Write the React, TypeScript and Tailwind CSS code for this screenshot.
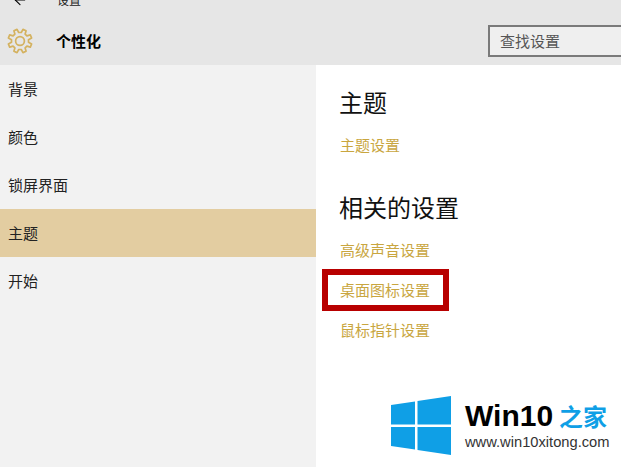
import { ArrowLeft } from 'lucide-react';

const FONT = 'font-["Noto_Sans_CJK_SC","Liberation_Sans",sans-serif]';

const navItems = ['背景', '颜色', '锁屏界面', '主题', '开始'];
const relatedLinks = ['高级声音设置', '桌面图标设置', '鼠标指针设置'];

// outline of an 8 tooth gear, centre 13,13
function gearPath() {
  const points: string[] = [];
  for (let i = 0; i < 8; i++) {
    const a = (i * Math.PI) / 4 + Math.PI / 8;
    const step = Math.PI / 8;
    const corners: [number, number][] = [
      [8.6, a - step * 0.62],
      [12, a - step * 0.36],
      [12, a + step * 0.36],
      [8.6, a + step * 0.62],
    ];
    corners.forEach(([r, t]) => {
      points.push(`${(13 + r * Math.cos(t)).toFixed(2)},${(13 + r * Math.sin(t)).toFixed(2)}`);
    });
  }
  return `M${points.join('L')}Z`;
}

function GearIcon() {
  return (
    <svg width="26" height="26" viewBox="0 0 26 26" fill="none" stroke="#d4b260" strokeWidth="1.7" strokeLinejoin="round" className="ml-[7px] shrink-0">
      <path d={gearPath()} />
      <circle cx="13" cy="13" r="4.4" />
    </svg>
  );
}

function WinLogo() {
  return (
    <svg width="60" height="60" viewBox="0 0 60 60" className="block shrink-0">
      <polygon points="0,9 24,5.5 24,28.5 0,28.5" fill="#0f9fe6" />
      <polygon points="26.5,5 60,0 60,28.5 26.5,28.5" fill="#0f9fe6" />
      <polygon points="0,31 24,31 24,53.5 0,50" fill="#0f9fe6" />
      <polygon points="26.5,31 60,31 60,59 26.5,54" fill="#0f9fe6" />
    </svg>
  );
}

export default function App() {
  return (
    <div className={`relative w-[621px] h-[467px] overflow-hidden bg-white ${FONT}`}>
      <header className="relative h-[65px] overflow-hidden bg-[#e6e6e6]">
        <div className="flex items-center h-[16px] mt-[-8px]">
          <ArrowLeft className="ml-[12px] shrink-0 text-black" size={16} strokeWidth={1.6} />
          <span className="ml-[29px] text-[12px] leading-none text-[#222]">设置</span>
        </div>
        <div className="flex items-center mt-[20px] h-[26px]">
          <GearIcon />
          <span className="ml-[23px] text-[15px] font-bold text-black">个性化</span>
        </div>
        <div className="absolute left-[488px] top-[25px] flex items-center w-[140px] h-[32px] pl-[10px] border-2 border-[#7a7a7a] bg-[#efefef] text-[15px] text-[#555]">
          查找设置
        </div>
      </header>

      <div className="flex h-[402px]">
        <nav className="w-[316px] bg-[#f2f2f2]">
          <ul>
            {navItems.map((item) => (
              <li
                key={item}
                className={`flex items-center h-[48px] pl-[8px] text-[15px] text-[#222] ${
                  item === '主题' ? 'bg-[#e3cda1]' : ''
                }`}
              >
                {item}
              </li>
            ))}
          </ul>
        </nav>

        <main className="flex-1 pl-[24px] pt-[19px]">
          <h2 className="-ml-px text-[24px] leading-[36px] text-[#111]">主题</h2>
          <a className="block mt-[15px] text-[15px] leading-[20px] text-[#c9a63f]">主题设置</a>

          <h2 className="-ml-px mt-[34px] text-[24px] leading-[36px] text-[#111]">相关的设置</h2>
          <ul className="mt-[15px] space-y-[20px]">
            {relatedLinks.map((link) => (
              <li key={link} className="text-[15px] leading-[20px] text-[#c9a63f]">
                {link}
              </li>
            ))}
          </ul>
        </main>
      </div>

      {/* red annotation box */}
      <div className="absolute left-[322px] top-[269px] w-[127px] h-[42px] border-[6px] border-[#b80000]" />

      {/* watermark */}
      <div className="absolute left-[391px] top-[396px] flex items-start gap-[14px]">
        <WinLogo />
        <div className="w-[160px]">
          <div className="flex items-center h-[40px]">
            <span className="font-['Liberation_Sans',sans-serif] font-bold text-[30px] leading-[40px] text-black">Win10</span>
            <span className="ml-[6px] font-bold text-[24px] leading-[40px] text-[#0f9fe6]">之家</span>
          </div>
          <div className="mt-[-2px] font-['Liberation_Sans',sans-serif] text-[14.7px] leading-[16px] text-[#333]">
            www.win10xitong.com
          </div>
        </div>
      </div>
    </div>
  );
}
